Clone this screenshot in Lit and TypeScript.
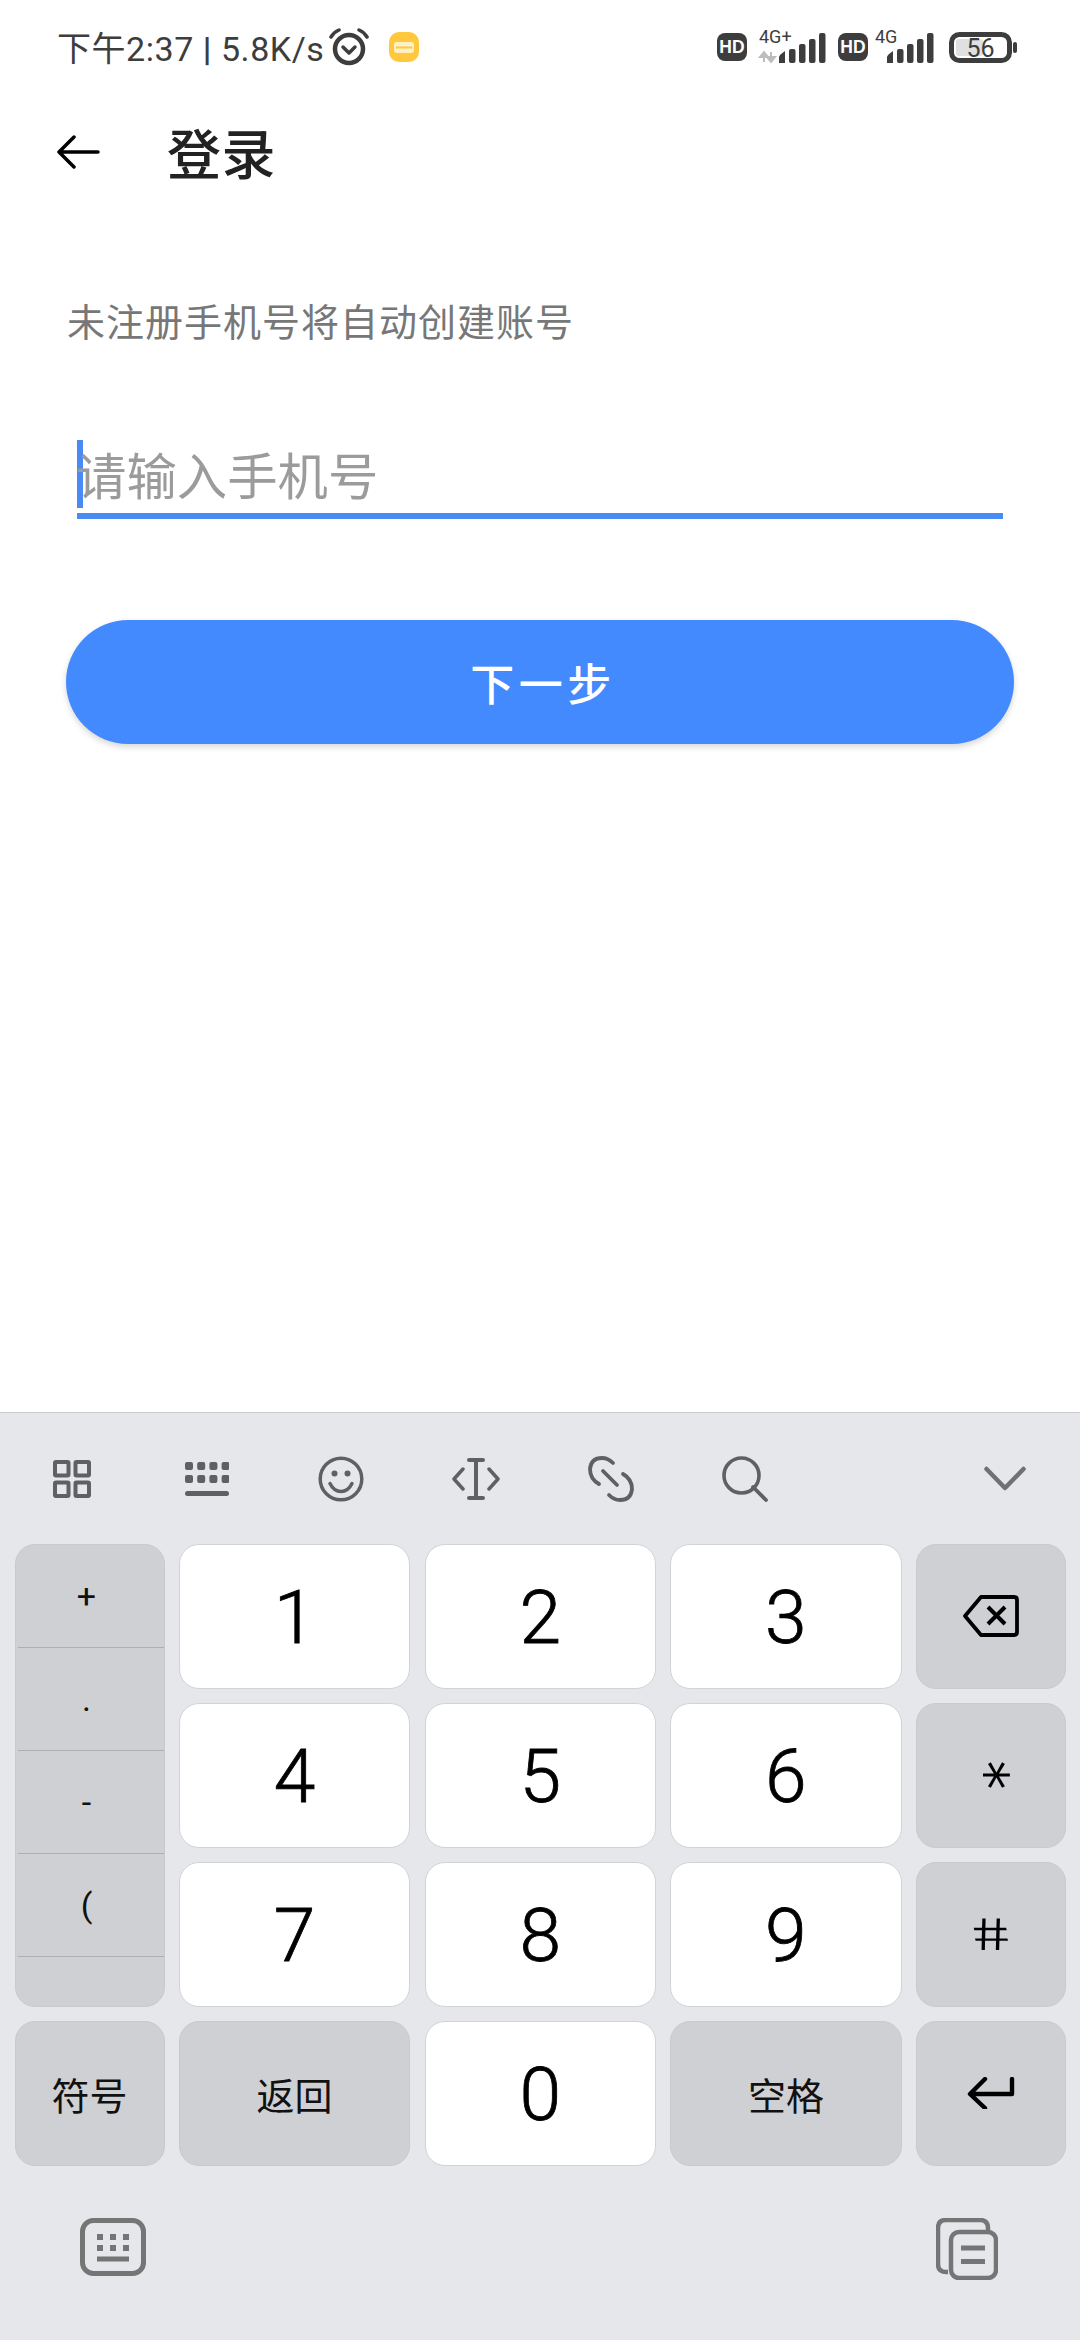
import { LitElement, html, css, svg } from "lit";
import { customElement } from "lit/decorators.js";

@customElement("app-root")
export class AppRoot extends LitElement {
  static styles = css`
    :host { display: block; width: 1080px; height: 2340px; background: #fff; overflow: hidden; font-family: "Noto Sans CJK SC", "Noto Sans", sans-serif; }
    .page { display: flex; flex-direction: column; width: 1080px; height: 2340px; }
    .status { height: 96px; flex: none; display: flex; align-items: center; position: relative; padding-left: 57px; color: #3d3d3d; }
    .time { font-family: "Roboto", "Noto Sans CJK SC", sans-serif; font-size: 34px; letter-spacing: 0.55px; white-space: nowrap; margin-top: -3px; }
    .time b { font-weight: 700; }
    .alarm { margin-left: 5px; flex: none; margin-top: -3px; }
    .note { margin-left: 20px; flex: none; margin-top: -2px; }
    .sig { position: absolute; left: 0; top: 0; }
    .header { height: 112px; flex: none; display: flex; align-items: center; padding-left: 56px; }
    .title { margin-left: 67px; font-size: 54px; font-weight: 500; color: #222; line-height: 1; letter-spacing: 0.5px; }
    .desc { margin: 85px 0 0 67px; font-size: 38px; letter-spacing: 1px; line-height: 54px; color: #777; height: 56px; }
    .field { margin: 91px 0 0 77px; width: 926px; height: 73px; border-bottom: 6px solid #4a8af4; display: flex; }
    .caret { width: 6px; height: 68px; background: #4a8af4; flex: none; }
    .ph { margin-left: -7px; font-size: 50.4px; line-height: 67px; color: #9b9b9b; }
    .btn { margin: 101px 0 0 66px; width: 948px; height: 124px; border-radius: 62px; background: #448aff; color: #fff; display: flex; align-items: center; justify-content: center; font-size: 44px; letter-spacing: 4.5px; font-weight: 500; box-shadow: 0 3px 6px rgba(0,0,0,.16); padding-left: 6px; box-sizing: border-box; }
    .spacer { flex: 1; }
    .kb { flex: none; height: 927px; background: #e6e7eb; border-top: 1px solid #cdcdd0; display: flex; flex-direction: column; }
    .tools { height: 131px; flex: none; display: flex; align-items: center; padding: 0 54px 0 4.5px; }
    .tool { width: 134.7px; display: flex; justify-content: center; align-items: center; flex: none; }
    .chev { margin-left: auto; display: flex; }
    .grid { display: grid; grid-template-columns: 150px 1fr 1fr 1fr 150px; grid-auto-rows: 144.7px; gap: 14.3px 14.5px; padding: 0 14px 0 14.5px; }
    .key { border-radius: 20px; display: flex; align-items: center; justify-content: center; box-sizing: border-box; color: #000; overflow: hidden; }
    .w { background: #fff; border: 1px solid #d2d3d6; font-family: "Roboto", sans-serif; font-size: 75px; font-weight: 300; -webkit-text-stroke: 0.8px #000; padding-top: 2px; }
    .g { background: #cfd0d4; border: 1px solid #c9cace; font-size: 38px; color: #111; }
    .side { grid-row: span 3; flex-direction: column; justify-content: flex-start; align-items: stretch; font-family: "Roboto", sans-serif; font-size: 34px; padding-left: 2px; }
    .cell { height: 103px; flex: none; box-sizing: border-box; border-bottom: 1.5px solid #adaeb2; display: flex; align-items: center; justify-content: center; padding-right: 8px; color: #111; }
    .cell.last { border-bottom: none; height: 50px; }
    .star { display: inline-block; font-family: "DejaVu Sans", sans-serif; font-size: 58px; line-height: 1; color: #000; transform-origin: 50% 40%; transform: translateY(0.1em) rotate(90deg); }
    .hash { display: inline-block; font-family: "Liberation Sans", sans-serif; font-size: 46px; line-height: 1; color: #000; transform: scaleX(1.35) skewX(11deg); }
    .bottom { flex: 1; display: flex; justify-content: space-between; align-items: flex-start; padding: 52px 82px 0 80px; }
  `;

  private icon(w: number, h: number, content: unknown, cls = "") {
    return html`<svg class=${cls} width=${w} height=${h} viewBox="0 0 ${w} ${h}" fill="none">${content}</svg>`;
  }

  private signal() {
    const b = (x: number, top: number) => svg`<rect x=${x} y=${top} width="6.5" height=${63 - top} rx="2" fill="#3d3d3d"/>`;
    const set = (x: number) => svg`
      <path d="M${x} 63v-6q0-2 6-6v12z" fill="#3d3d3d"/>
      ${b(x + 10, 49)}${b(x + 20, 44)}${b(x + 30, 39)}${b(x + 40, 33)}`;
    const hd = (x: number) => svg`
      <rect x=${x} y="33" width="30" height="28" rx="8" fill="#3d3d3d"/>
      <text x=${x + 15} y="53" text-anchor="middle" font-family="Liberation Sans" font-weight="700" font-size="17.5" fill="#fff">HD</text>`;
    return html`<svg class="sig" width="1080" height="96" viewBox="0 0 1080 96" fill="none">
      ${hd(717)}
      <text x="759" y="43" font-family="Roboto" font-size="18" fill="#3d3d3d">4G+</text>
      <path d="M764 52v10M764 52l-4 5h8zM771 62V52M771 62l-4-5h8z" stroke="#bdbdbd" stroke-width="2" fill="#bdbdbd"/>
      ${set(779)}
      ${hd(838)}
      <text x="875" y="43" font-family="Roboto" font-size="18" fill="#3d3d3d">4G</text>
      ${set(887)}
      <rect x="951.5" y="34.5" width="58" height="26" rx="8" stroke="#3d3d3d" stroke-width="5"/>
      <rect x="956" y="39" width="27" height="17" rx="3" fill="#e0e0e0"/>
      <text x="980.5" y="57" text-anchor="middle" font-family="Roboto" font-size="25" fill="#3d3d3d">56</text>
      <rect x="1013" y="42" width="4" height="11" rx="2" fill="#3d3d3d"/>
    </svg>`;
  }

  render() {
    const S = "#5f6063";
    return html`<div class="page">
      <div class="status">
        <span class="time">下午2:37 <b>|</b> 5.8K/s</span>
        ${this.icon(40, 38, svg`
          <circle cx="20" cy="21" r="14" stroke="#3d3d3d" stroke-width="4.5"/>
          <path d="M14 19l6 6 6-6" stroke="#3d3d3d" stroke-width="3.5" stroke-linecap="round" stroke-linejoin="round"/>
          <path d="M2 9Q5 4 10 2M38 9Q35 4 30 2" stroke="#3d3d3d" stroke-width="3.5" stroke-linecap="round"/>`, "alarm")}
        ${this.icon(30, 30, svg`
          <rect width="30" height="30" rx="10" fill="#ffc83d"/>
          <rect x="5" y="10" width="20" height="11" rx="3" fill="#fff0c4"/>
          <path d="M7 15.5h16" stroke="#ffc83d" stroke-width="2"/>`, "note")}
        ${this.signal()}
      </div>
      <div class="header">
        ${this.icon(44, 34, svg`<path d="M42 17H3M18 2L3 17l15 15" stroke="#000" stroke-width="3.5" stroke-linecap="round" stroke-linejoin="round"/>`)}
        <span class="title">登录</span>
      </div>
      <div class="desc">未注册手机号将自动创建账号</div>
      <div class="field"><span class="caret"></span><span class="ph">请输入手机号</span></div>
      <div class="btn">下一步</div>
      <div class="spacer"></div>
      <div class="kb">
        <div class="tools">
          <div class="tool">${this.icon(38, 38, svg`
            <g stroke=${S} stroke-width="4"><rect x="2" y="2" width="13.5" height="13.5" rx="1"/><rect x="22.5" y="2" width="13.5" height="13.5" rx="1"/><rect x="2" y="22.5" width="13.5" height="13.5" rx="1"/><rect x="22.5" y="22.5" width="13.5" height="13.5" rx="1"/></g>`)}</div>
          <div class="tool">${this.icon(44, 34, svg`
            <g fill=${S}>
              ${[0, 1, 2, 3].map((i) => svg`<rect x=${i * 12.2} y="0" width="8" height="8" rx="2"/><rect x=${i * 12.2} y="13" width="8" height="8" rx="2"/>`)}
              <rect x="0" y="29" width="44" height="5" rx="2.5"/></g>`)}</div>
          <div class="tool">${this.icon(46, 46, svg`
            <circle cx="23" cy="23" r="20.8" stroke=${S} stroke-width="3.5"/>
            <circle cx="16.5" cy="17.5" r="3" fill=${S}/><circle cx="29.5" cy="17.5" r="3" fill=${S}/>
            <path d="M12 27.5q4 8 11 8t11-8" stroke=${S} stroke-width="3.5" stroke-linecap="round"/>`)}</div>
          <div class="tool">${this.icon(48, 42, svg`
            <path d="M11 11L2 21l9 10M37 11l9 10-9 10" stroke=${S} stroke-width="3.5" stroke-linecap="round" stroke-linejoin="round"/>
            <path d="M24 2v38M17 2h14M17 40h14" stroke=${S} stroke-width="4" stroke-linecap="round"/>`)}</div>
          <div class="tool">${this.icon(46, 46, svg`
            <path d="M11 28Q2 23 2 13 3 2 14 2q6 0 11 5M35 18q9 5 9 15-1 11-12 11-6 0-11-5M15 15l14 14" stroke=${S} stroke-width="3.8" stroke-linecap="round"/>`)}</div>
          <div class="tool">${this.icon(46, 46, svg`
            <circle cx="19.5" cy="19.5" r="17.5" stroke=${S} stroke-width="3.6"/>
            <path d="M31 31l13 13" stroke=${S} stroke-width="3.8" stroke-linecap="round"/>`)}</div>
          <div class="chev">${this.icon(42, 25, svg`<path d="M2.5 3L21 22 39.5 3" stroke="#707174" stroke-width="4.5" stroke-linecap="round" stroke-linejoin="round"/>`)}</div>
        </div>
        <div class="grid">
          <div class="key g side">
            <div class="cell">+</div><div class="cell">.</div><div class="cell">-</div><div class="cell">(</div><div class="cell last"></div>
          </div>
          <div class="key w">1</div><div class="key w">2</div><div class="key w">3</div>
          <div class="key g">${this.icon(56, 42, svg`
            <path d="M18 2h33q3 0 3 3v32q0 3-3 3H18L2 21z" stroke="#000" stroke-width="3.8" stroke-linejoin="round"/>
            <path d="M25 12l17 17M42 12L25 29" stroke="#000" stroke-width="4"/>`)}</div>
          <div class="key w">4</div><div class="key w">5</div><div class="key w">6</div>
          <div class="key g"><span class="star">*</span></div>
          <div class="key w">7</div><div class="key w">8</div><div class="key w">9</div>
          <div class="key g"><span class="hash">#</span></div>
          <div class="key g">符号</div>
          <div class="key g">返回</div>
          <div class="key w">0</div>
          <div class="key g">空格</div>
          <div class="key g">${this.icon(48, 32, svg`
            <path d="M45 2v15H4M18 2L3 17l15 14" stroke="#000" stroke-width="4.4" stroke-linejoin="round" stroke-linecap="round"/>`)}</div>
        </div>
        <div class="bottom">
          ${this.icon(66, 58, svg`
            <rect x="2.5" y="2.5" width="61" height="53" rx="11" stroke="#757575" stroke-width="5"/>
            <g fill="#757575">
              ${[0, 1, 2].map((i) => svg`<rect x=${17 + i * 13} y="16" width="6" height="6"/><rect x=${17 + i * 13} y="27" width="6" height="6"/>`)}
              <rect x="17" y="38.5" width="32" height="5"/></g>`)}
          ${this.icon(62, 62, svg`
            <path d="M12 54H10q-8 0-8-8V10q0-8 8-8h34q8 0 8 8v3" stroke="#757575" stroke-width="4.5"/>
            <rect x="15" y="14" width="45" height="46" rx="8" stroke="#757575" stroke-width="4.5"/>
            <path d="M25 30h24M25 43.5h24" stroke="#757575" stroke-width="5"/>`)}
        </div>
      </div>
    </div>`;
  }
}
